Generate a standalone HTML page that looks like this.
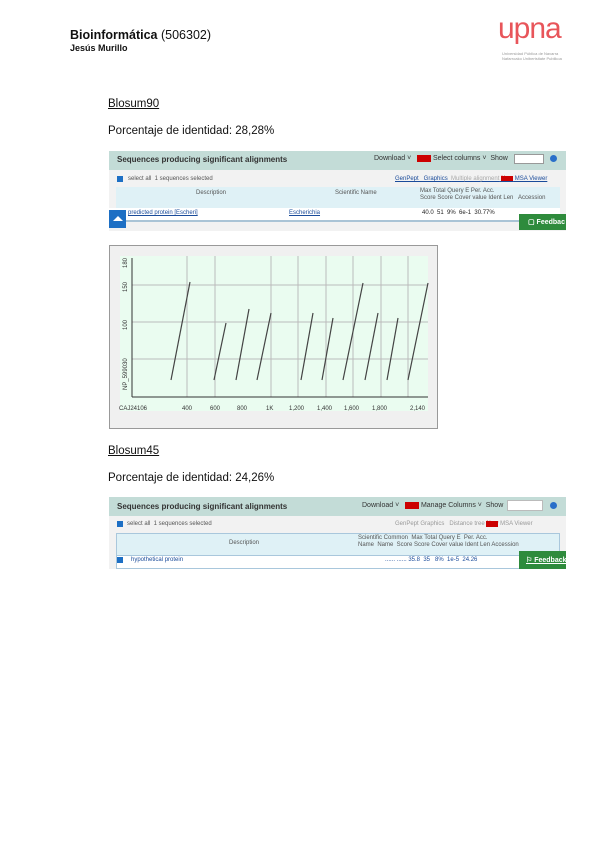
<!DOCTYPE html>
<html><head><meta charset="utf-8"><style>
*{margin:0;padding:0;box-sizing:border-box}
body{width:600px;height:848px;background:#fff;position:relative;font-family:"Liberation Sans",sans-serif;color:#111;overflow:hidden}
.a{position:absolute;white-space:nowrap}
.t{font-size:11.5px}
.s{font-size:6px;color:#555}
.lk{color:#1a4b9a;text-decoration:underline}
</style></head><body>
<div class="a" style="left:70px;top:28px;font-size:12.5px"><b>Bioinformática</b> (506302)</div>
<div class="a" style="left:70px;top:43px;font-size:9px;font-weight:bold">Jesús Murillo</div>
<div class="a" style="left:498px;top:12px;font-size:30px;line-height:34px;color:#e8555a;letter-spacing:-1px">upna</div>
<div class="a" style="left:502px;top:51px;font-size:4px;color:#999;line-height:5px">Universidad Pública de Navarra<br>Nafarroako Unibertsitate Publikoa</div>

<div class="a t" style="left:108px;top:98px;text-decoration:underline">Blosum90</div>
<div class="a t" style="left:108px;top:125px">Porcentaje de identidad: 28,28%</div>

<!-- table 1 -->
<div class="a" style="left:109px;top:151px;width:457px;height:80px;background:#f2f2f2"></div>
<div class="a" style="left:109px;top:151px;width:457px;height:19px;background:#c3dcd7"></div>
<div class="a" style="left:117px;top:155px;font-size:8px;font-weight:bold;color:#333">Sequences producing significant alignments</div>
<div class="a" style="left:374px;top:155px;font-size:7px;color:#333">Download ˅ &nbsp;&nbsp;<span style="background:#c00;color:#c00">New</span> Select columns ˅ &nbsp;Show</div>
<div class="a" style="left:514px;top:154px;width:30px;height:10px;background:#fff;border:1px solid #999"></div>
<div class="a" style="left:550px;top:155px;width:7px;height:7px;border-radius:50%;background:#2a6fc9"></div>
<div class="a" style="left:117px;top:176px;width:6px;height:6px;background:#1d6fc4"></div>
<div class="a s" style="left:128px;top:176px">select all &nbsp;1 sequences selected</div>
<div class="a s lk" style="left:395px;top:176px">GenPept &nbsp; Graphics &nbsp;<span style="color:#aaa">Multiple alignment</span> <span style="background:#c00;color:#c00">New</span> MSA Viewer</div>
<div class="a" style="left:116px;top:187px;width:444px;height:21px;background:#dff1f6"></div>
<div class="a s" style="left:196px;top:190px">Description</div>
<div class="a s" style="left:335px;top:190px">Scientific Name</div>
<div class="a s" style="left:420px;top:188px;line-height:7px">Max Total Query E Per. Acc.<br>Score Score Cover value Ident Len &nbsp; Accession</div>
<div class="a" style="left:109px;top:208px;width:451px;height:14px;background:#fff;border-bottom:2px solid #aac4d6"></div>
<div class="a s lk" style="left:128px;top:210px">predicted protein [Escheri]</div>
<div class="a s lk" style="left:289px;top:210px">Escherichia</div>
<div class="a s" style="left:422px;top:210px;color:#222">40.0 &nbsp;51 &nbsp;9% &nbsp;6e-1 &nbsp;30.77%</div>
<div class="a" style="left:109px;top:210px;width:17px;height:18px;background:#1d6fc4"></div>
<div class="a" style="left:113px;top:216px;width:0;height:0;border-left:5px solid transparent;border-right:5px solid transparent;border-bottom:5px solid #fff"></div>
<div class="a" style="left:519px;top:214px;width:47px;height:16px;background:#2e8b3c;color:#fff;font-size:7px;font-weight:bold;padding:4px 0 0 9px">▢ Feedbac</div>

<!-- plot -->
<div class="a" style="left:109px;top:245px;width:329px;height:184px;background:#f0f0f0;border:1px solid #999"></div>
<svg class="a" style="left:0;top:0" width="600" height="848">
<rect x="120" y="256" width="308" height="155" fill="#eafcf0"/>
<g stroke="#bbb" stroke-width="1">
<line x1="187" y1="256" x2="187" y2="397"/><line x1="215" y1="256" x2="215" y2="397"/>
<line x1="271" y1="256" x2="271" y2="397"/><line x1="298" y1="256" x2="298" y2="397"/>
<line x1="326" y1="256" x2="326" y2="397"/><line x1="353" y1="256" x2="353" y2="397"/>
<line x1="381" y1="256" x2="381" y2="397"/><line x1="408" y1="256" x2="408" y2="397"/>
<line x1="132" y1="285" x2="428" y2="285"/><line x1="132" y1="322" x2="428" y2="322"/><line x1="132" y1="359" x2="428" y2="359"/>
</g>
<g stroke="#333" stroke-width="1"><line x1="132" y1="258" x2="132" y2="397"/><line x1="132" y1="397" x2="428" y2="397"/></g>
<g stroke="#444" stroke-width="1.2">
<line x1="171" y1="380" x2="190" y2="282"/><line x1="214" y1="380" x2="226" y2="323"/>
<line x1="236" y1="380" x2="249" y2="309"/><line x1="257" y1="380" x2="271" y2="313"/>
<line x1="301" y1="380" x2="313" y2="313"/><line x1="322" y1="380" x2="333" y2="318"/>
<line x1="343" y1="380" x2="363" y2="283"/><line x1="365" y1="380" x2="378" y2="313"/>
<line x1="387" y1="380" x2="398" y2="318"/><line x1="408" y1="380" x2="428" y2="283"/>
</g>
<g font-size="6" fill="#333" font-family="Liberation Sans">
<text x="119" y="410">CAJ24106</text><text x="182" y="410">400</text><text x="210" y="410">600</text><text x="237" y="410">800</text><text x="266" y="410">1K</text><text x="289" y="410">1,200</text><text x="317" y="410">1,400</text><text x="344" y="410">1,600</text><text x="372" y="410">1,800</text><text x="410" y="410">2,140</text>
<text transform="translate(127,390) rotate(-90)">NP_599030</text>
<text transform="translate(127,330) rotate(-90)">100</text>
<text transform="translate(127,292) rotate(-90)">150</text>
<text transform="translate(127,268) rotate(-90)">180</text>
</g>
</svg>

<div class="a t" style="left:108px;top:445px;text-decoration:underline">Blosum45</div>
<div class="a t" style="left:108px;top:472px">Porcentaje de identidad: 24,26%</div>

<!-- table 2 -->
<div class="a" style="left:109px;top:497px;width:457px;height:72px;background:#f2f2f2"></div>
<div class="a" style="left:109px;top:497px;width:457px;height:19px;background:#c3dcd7"></div>
<div class="a" style="left:117px;top:502px;font-size:8px;font-weight:bold;color:#333">Sequences producing significant alignments</div>
<div class="a" style="left:362px;top:502px;font-size:7px;color:#333">Download ˅ &nbsp;&nbsp;<span style="background:#c00;color:#c00">New</span> Manage Columns ˅ &nbsp;Show</div>
<div class="a" style="left:507px;top:500px;width:36px;height:11px;background:#fff;border:1px solid #bbb"></div>
<div class="a" style="left:550px;top:502px;width:7px;height:7px;border-radius:50%;background:#2a6fc9"></div>
<div class="a" style="left:117px;top:521px;width:6px;height:6px;background:#1d6fc4"></div>
<div class="a s" style="left:127px;top:521px">select all &nbsp;1 sequences selected</div>
<div class="a s" style="left:395px;top:521px;color:#999">GenPept Graphics &nbsp; Distance tree <span style="background:#c00;color:#c00">New</span> MSA Viewer</div>
<div class="a" style="left:116px;top:533px;width:444px;height:23px;background:#dff1f6;border:1px solid #a9c7dc"></div>
<div class="a s" style="left:229px;top:540px">Description</div>
<div class="a s" style="left:358px;top:535px;line-height:7px">Scientific Common &nbsp;Max Total Query E &nbsp;Per. Acc.<br>Name &nbsp;Name &nbsp;Score Score Cover value Ident Len Accession</div>
<div class="a" style="left:116px;top:556px;width:444px;height:13px;background:#fff;border:1px solid #a9c7dc;border-top:none"></div>
<div class="a" style="left:117px;top:557px;width:6px;height:6px;background:#1d6fc4"></div>
<div class="a s" style="left:131px;top:557px;color:#1a4b9a">hypothetical protein</div>
<div class="a s" style="left:385px;top:557px;color:#1a4b9a">...... ...... 35.8 &nbsp;35 &nbsp; 8% &nbsp;1e-5 &nbsp;24.26</div>
<div class="a" style="left:519px;top:551px;width:47px;height:18px;background:#2e8b3c;color:#fff;font-size:7px;font-weight:bold;padding:5px 0 0 7px;text-decoration:underline">⚐ Feedback</div>
</body></html>
